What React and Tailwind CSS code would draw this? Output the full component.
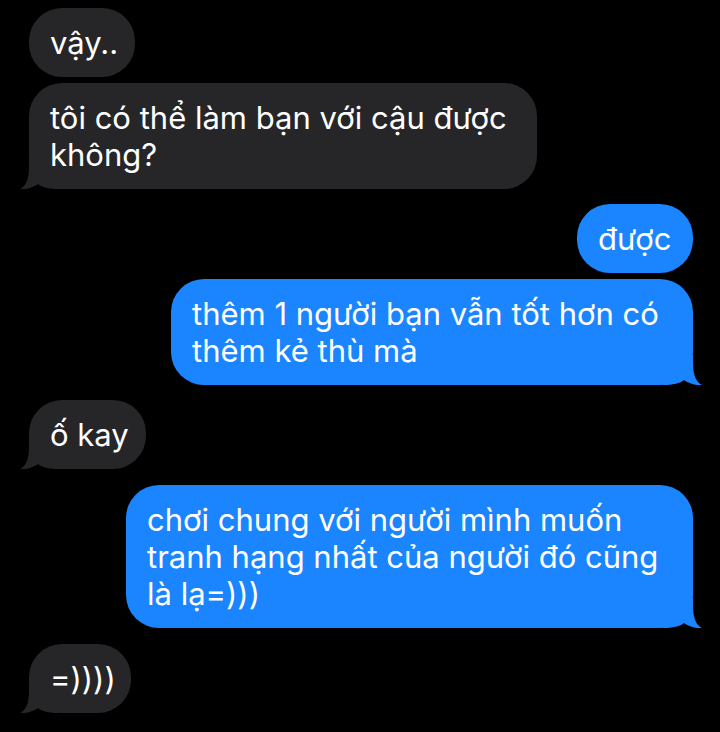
import React from "react";

function Tail({ side, color }) {
  const isRight = side === "right";
  return (
    <svg
      width="40"
      height="30"
      viewBox="0 0 40 30"
      className={
        isRight
          ? "absolute bottom-0 right-[-10px]"
          : "absolute bottom-0 left-[-10px] -scale-x-100"
      }
    >
      <path
        d="M0,0 H30 V8 C30,20 33,27 39,30 C33,30.6 26,28.6 21,25 C17,28.5 10,30 0,30 Z"
        fill={color}
      />
    </svg>
  );
}

const GRAY = "#262628";
const BLUE = "#1a85ff";

function Bubble({ side, tail, width, lines, className = "" }) {
  const isRight = side === "right";
  const color = isRight ? BLUE : GRAY;
  return (
    <div className={`flex ${isRight ? "justify-end" : "justify-start"} ${className}`}>
      <div
        className={`relative rounded-[33px] px-[21px] py-[16px] text-white text-[31px] leading-[37px] whitespace-nowrap ${
          isRight ? "bg-[#1a85ff]" : "bg-[#262628]"
        }`}
        style={{ width }}
      >
        {tail && <Tail side={side} color={color} />}
        <div className="relative">
          {lines.map((l, i) => (
            <div key={i}>{l}</div>
          ))}
        </div>
      </div>
    </div>
  );
}

export default function App() {
  return (
    <div
      className="w-[720px] h-[732px] overflow-hidden bg-black pl-[29px] pr-[27px] pt-[8px] flex flex-col"
      style={{ fontFamily: "Inter, 'Noto Sans', sans-serif" }}
    >
      <Bubble side="left" width={106} lines={["vậy.."]} />
      <Bubble
        side="left"
        tail
        width={508}
        className="mt-[6px]"
        lines={["tôi có thể làm bạn với cậu được", "không?"]}
      />
      <Bubble side="right" width={116} className="mt-[15px]" lines={["được"]} />
      <Bubble
        side="right"
        tail
        width={522}
        className="mt-[6px]"
        lines={["thêm 1 người bạn vẫn tốt hơn có", "thêm kẻ thù mà"]}
      />
      <Bubble side="left" tail width={117} className="mt-[15px]" lines={["ố kay"]} />
      <Bubble
        side="right"
        tail
        width={567}
        className="mt-[16px]"
        lines={[
          "chơi chung với người mình muốn",
          "tranh hạng nhất của người đó cũng",
          "là lạ=)))",
        ]}
      />
      <Bubble side="left" tail width={102} className="mt-[16px]" lines={["=))))"]} />
    </div>
  );
}
